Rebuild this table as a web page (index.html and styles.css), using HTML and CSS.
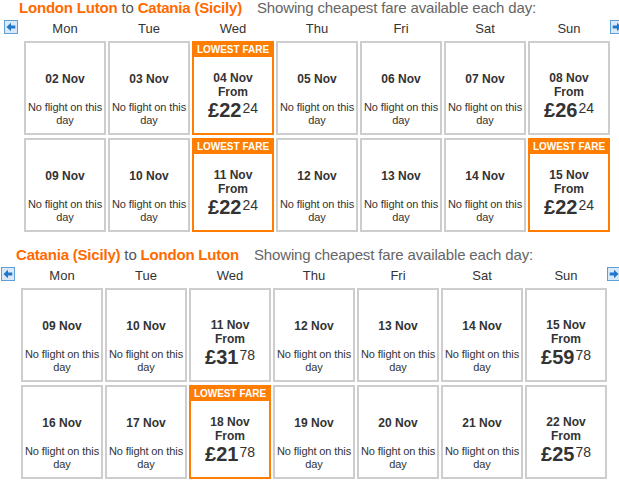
FILE: index.html
```html
<!DOCTYPE html>
<html lang="en">
<head>
  <meta charset="UTF-8" />
  <title>Fare calendar</title>
  <link rel="stylesheet" href="styles.css">
</head>
<body>
  <section class="leg leg-out">
    <h2 class="leg-title">
      <span class="place">London Luton</span> to <span class="place">Catania (Sicily)</span>
      <span class="hint">Showing cheapest fare available each day:</span>
    </h2>
    <div class="calendar">
      <a class="nav" href="#" title="Previous week">
        <svg width="14" height="14" viewBox="0 0 14 14"><rect x="0.5" y="0.5" width="13" height="13" fill="#d9e9f7" stroke="#5f9fd6"/><path d="M2.5 7 L7 2.8 V5.5 H11.3 V8.5 H7 V11.2 Z" fill="#1f78c9"/></svg>
      </a>
      <div class="grid">
        <div class="dow">Mon</div><div class="dow">Tue</div><div class="dow">Wed</div><div class="dow">Thu</div><div class="dow">Fri</div><div class="dow">Sat</div><div class="dow">Sun</div>

        <div class="day"><div class="date">02 Nov</div><div class="none">No flight on this day</div></div>
        <div class="day"><div class="date">03 Nov</div><div class="none">No flight on this day</div></div>
        <div class="day fare lowest"><div class="badge">LOWEST FARE</div><div class="date">04 Nov</div><div class="from">From</div><div class="price">£22<span class="pence">24</span></div></div>
        <div class="day"><div class="date">05 Nov</div><div class="none">No flight on this day</div></div>
        <div class="day"><div class="date">06 Nov</div><div class="none">No flight on this day</div></div>
        <div class="day"><div class="date">07 Nov</div><div class="none">No flight on this day</div></div>
        <div class="day fare"><div class="date">08 Nov</div><div class="from">From</div><div class="price">£26<span class="pence">24</span></div></div>

        <div class="day"><div class="date">09 Nov</div><div class="none">No flight on this day</div></div>
        <div class="day"><div class="date">10 Nov</div><div class="none">No flight on this day</div></div>
        <div class="day fare lowest"><div class="badge">LOWEST FARE</div><div class="date">11 Nov</div><div class="from">From</div><div class="price">£22<span class="pence">24</span></div></div>
        <div class="day"><div class="date">12 Nov</div><div class="none">No flight on this day</div></div>
        <div class="day"><div class="date">13 Nov</div><div class="none">No flight on this day</div></div>
        <div class="day"><div class="date">14 Nov</div><div class="none">No flight on this day</div></div>
        <div class="day fare lowest"><div class="badge">LOWEST FARE</div><div class="date">15 Nov</div><div class="from">From</div><div class="price">£22<span class="pence">24</span></div></div>
      </div>
      <a class="nav" href="#" title="Next week">
        <svg width="14" height="14" viewBox="0 0 14 14"><rect x="0.5" y="0.5" width="13" height="13" fill="#d9e9f7" stroke="#5f9fd6"/><path d="M11.5 7 L7 2.8 V5.5 H2.7 V8.5 H7 V11.2 Z" fill="#1f78c9"/></svg>
      </a>
    </div>
  </section>

  <section class="leg leg-back">
    <h2 class="leg-title">
      <span class="place">Catania (Sicily)</span> to <span class="place">London Luton</span>
      <span class="hint">Showing cheapest fare available each day:</span>
    </h2>
    <div class="calendar">
      <a class="nav" href="#" title="Previous week">
        <svg width="14" height="14" viewBox="0 0 14 14"><rect x="0.5" y="0.5" width="13" height="13" fill="#d9e9f7" stroke="#5f9fd6"/><path d="M2.5 7 L7 2.8 V5.5 H11.3 V8.5 H7 V11.2 Z" fill="#1f78c9"/></svg>
      </a>
      <div class="grid">
        <div class="dow">Mon</div><div class="dow">Tue</div><div class="dow">Wed</div><div class="dow">Thu</div><div class="dow">Fri</div><div class="dow">Sat</div><div class="dow">Sun</div>

        <div class="day"><div class="date">09 Nov</div><div class="none">No flight on this day</div></div>
        <div class="day"><div class="date">10 Nov</div><div class="none">No flight on this day</div></div>
        <div class="day fare"><div class="date">11 Nov</div><div class="from">From</div><div class="price">£31<span class="pence">78</span></div></div>
        <div class="day"><div class="date">12 Nov</div><div class="none">No flight on this day</div></div>
        <div class="day"><div class="date">13 Nov</div><div class="none">No flight on this day</div></div>
        <div class="day"><div class="date">14 Nov</div><div class="none">No flight on this day</div></div>
        <div class="day fare"><div class="date">15 Nov</div><div class="from">From</div><div class="price">£59<span class="pence">78</span></div></div>

        <div class="day"><div class="date">16 Nov</div><div class="none">No flight on this day</div></div>
        <div class="day"><div class="date">17 Nov</div><div class="none">No flight on this day</div></div>
        <div class="day fare lowest"><div class="badge">LOWEST FARE</div><div class="date">18 Nov</div><div class="from">From</div><div class="price">£21<span class="pence">78</span></div></div>
        <div class="day"><div class="date">19 Nov</div><div class="none">No flight on this day</div></div>
        <div class="day"><div class="date">20 Nov</div><div class="none">No flight on this day</div></div>
        <div class="day"><div class="date">21 Nov</div><div class="none">No flight on this day</div></div>
        <div class="day fare"><div class="date">22 Nov</div><div class="from">From</div><div class="price">£25<span class="pence">78</span></div></div>
      </div>
      <a class="nav" href="#" title="Next week">
        <svg width="14" height="14" viewBox="0 0 14 14"><rect x="0.5" y="0.5" width="13" height="13" fill="#d9e9f7" stroke="#5f9fd6"/><path d="M11.5 7 L7 2.8 V5.5 H2.7 V8.5 H7 V11.2 Z" fill="#1f78c9"/></svg>
      </a>
    </div>
  </section>
</body>
</html>
```

FILE: styles.css
```css
html {
  overflow: hidden;
}

body {
  font-family: 'Liberation Sans', Arial, sans-serif;
  background: #fff;
  color: #333;
  margin: 0;
}

.leg-out {
  padding-left: 4px;
}

.leg-back {
  padding-left: 1px;
  margin-top: 15px;
}

.leg-title {
  margin: 0 0 4px 15px;
  font-size: 15px;
  line-height: 16px;
  font-weight: normal;
  color: #555;
  white-space: nowrap;
  letter-spacing: -0.15px;
}

.place {
  color: #ff6a00;
  font-weight: bold;
  letter-spacing: -0.2px;
}

.hint {
  margin-left: 11px;
  color: #666;
}

.calendar {
  display: flex;
  align-items: flex-start;
}

.nav {
  display: block;
  width: 14px;
  height: 14px;
  flex: none;
}

.nav svg {
  display: block;
}

.grid {
  display: grid;
  grid-template-columns: repeat(7, 82px);
  grid-template-rows: 18px 94px 94px;
  column-gap: 2px;
  row-gap: 3px;
  margin-left: 6px;
  flex: none;
}

.dow {
  font-size: 13px;
  line-height: 18px;
  text-align: center;
  color: #333;
}

.day {
  position: relative;
  box-sizing: border-box;
  border: 2px solid #cdcdcd;
  padding: 29px 0 0;
  text-align: center;
  background: #fff;
}

.day.fare {
  padding-top: 28px;
}

.day.lowest {
  border-color: #ff7d00;
}

.badge {
  position: absolute;
  top: 0;
  left: 0;
  right: 0;
  height: 14px;
  line-height: 13px;
  background: #ff7d00;
  color: #fff;
  font-size: 10px;
  font-weight: bold;
}

.date {
  font-size: 12px;
  line-height: 14px;
  font-weight: bold;
}

.none {
  margin-top: 15px;
  font-size: 11px;
  line-height: 13px;
  letter-spacing: -0.1px;
}

.from {
  font-size: 12px;
  line-height: 14px;
  font-weight: bold;
}

.price {
  font-size: 20px;
  line-height: 22px;
  font-weight: bold;
}

.pence {
  display: inline-block;
  vertical-align: top;
  margin-left: 1px;
  padding-top: 2px;
  font-size: 14px;
  line-height: 14px;
  font-weight: normal;
}
```
